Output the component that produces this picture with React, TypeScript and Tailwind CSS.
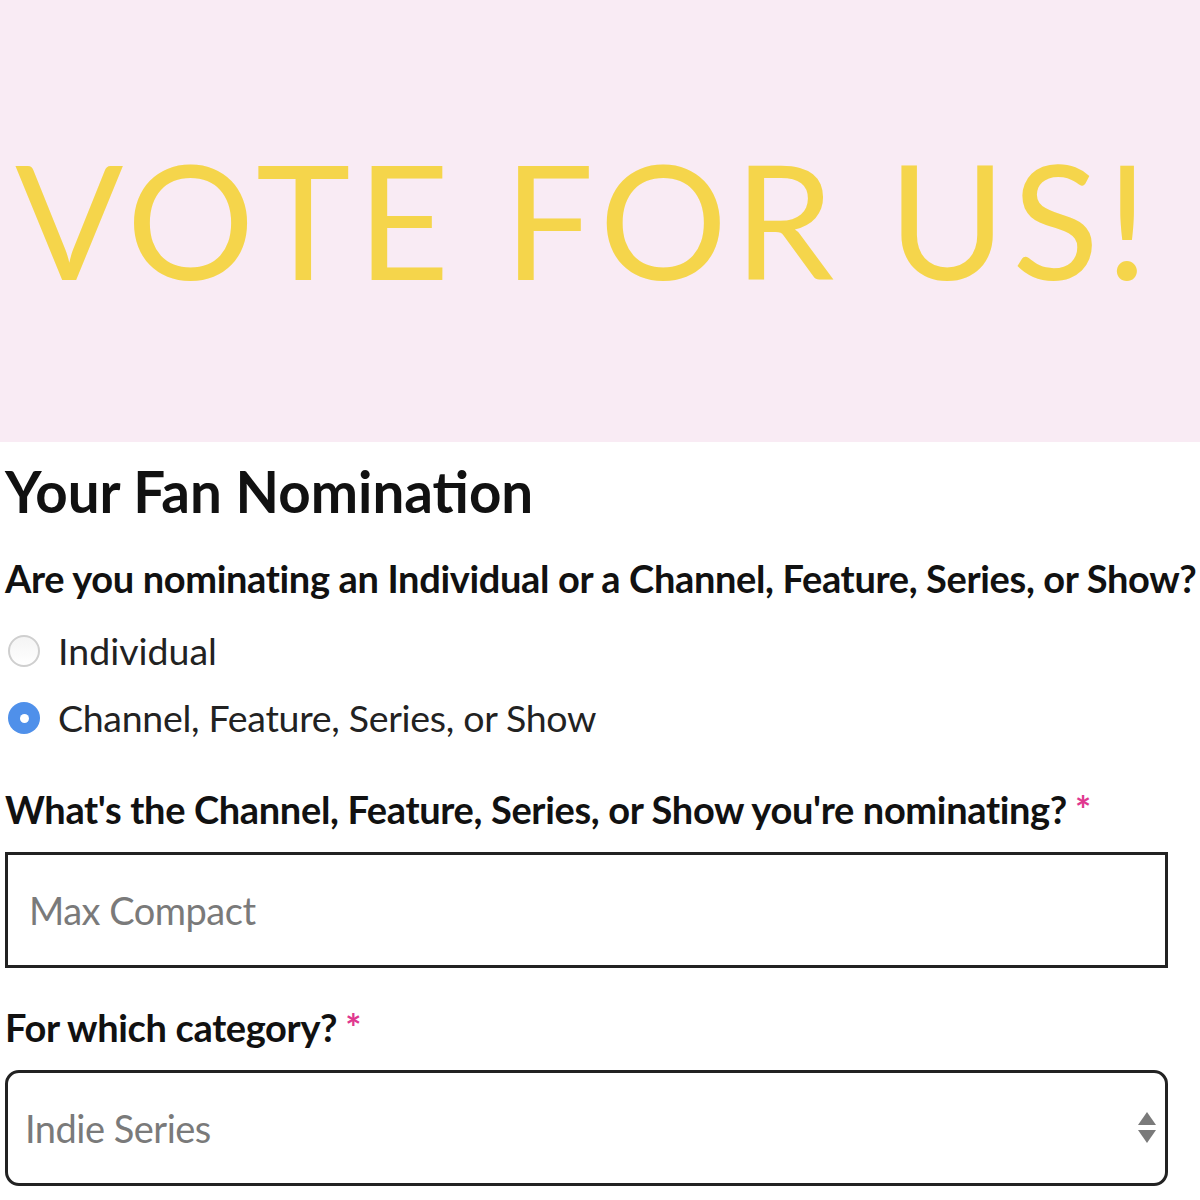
import React from "react";

export default function App() {
  return (
    <div className="w-[1200px] h-[1200px] overflow-hidden bg-white" style={{ fontFamily: "Lato, 'Noto Sans', sans-serif" }}>
      <div className="h-[442px] bg-[#f9ebf4] flex items-center pl-[15px]">
        <div className="text-[160px] leading-none font-normal text-[#f5d54b] tracking-[6.5px] whitespace-nowrap mt-[-7px]">
          VOTE FOR US!
        </div>
      </div>
      <div className="px-[5px]">
        <h1 className="text-[56.5px] leading-[60px] font-bold text-[#111] mt-[19px]">Your Fan Nomination</h1>
        <div className="text-[38px] leading-[44px] font-bold text-[#111] mt-[35px] tracking-[-0.35px] whitespace-nowrap">
          Are you nominating an Individual or a Channel, Feature, Series, or Show?
        </div>
        <div className="flex items-center mt-[29px] h-[44px]">
          <div className="w-[32px] h-[32px] rounded-full border-[2px] border-[#cfcfcf] bg-gradient-to-b from-[#f4f4f4] to-white ml-[3px]" />
          <span className="ml-[18px] text-[37.5px] text-[#222]">Individual</span>
        </div>
        <div className="flex items-center mt-[23px] h-[44px]">
          <div className="w-[32px] h-[32px] rounded-full bg-[#4f90ea] ml-[3px] flex items-center justify-center">
            <div className="w-[9px] h-[9px] rounded-full bg-white" />
          </div>
          <span className="ml-[18px] text-[37.5px] text-[#222] tracking-[-0.3px]">Channel, Feature, Series, or Show</span>
        </div>
        <div className="text-[38px] leading-[44px] font-bold text-[#111] mt-[47px] tracking-[-0.35px] whitespace-nowrap">
          What's the Channel, Feature, Series, or Show you're nominating?
          <span className="text-[#e0388f] ml-[8px]">*</span>
        </div>
        <div className="mt-[21px] w-[1163px] h-[116px] border-[3px] border-[#222] flex items-center pl-[21px]">
          <span className="text-[38px] text-[#7a7a7a] tracking-[-0.5px]">Max Compact</span>
        </div>
        <div className="text-[38px] leading-[44px] font-bold text-[#111] mt-[37px] tracking-[-0.35px] whitespace-nowrap">
          For which category?
          <span className="text-[#e0388f] ml-[8px]">*</span>
        </div>
        <div className="mt-[21px] w-[1163px] h-[116px] border-[3px] border-[#222] rounded-[14px] flex items-center pl-[17px] pr-[6px]">
          <span className="text-[38px] text-[#7a7a7a] tracking-[-0.5px] flex-1">Indie Series</span>
          <svg width="20" height="34" viewBox="0 0 20 34" className="mr-[2px]">
            <polygon points="10,1 19,14 1,14" fill="#7a7a7a" />
            <polygon points="1,19 19,19 10,32" fill="#7a7a7a" />
          </svg>
        </div>
      </div>
    </div>
  );
}
